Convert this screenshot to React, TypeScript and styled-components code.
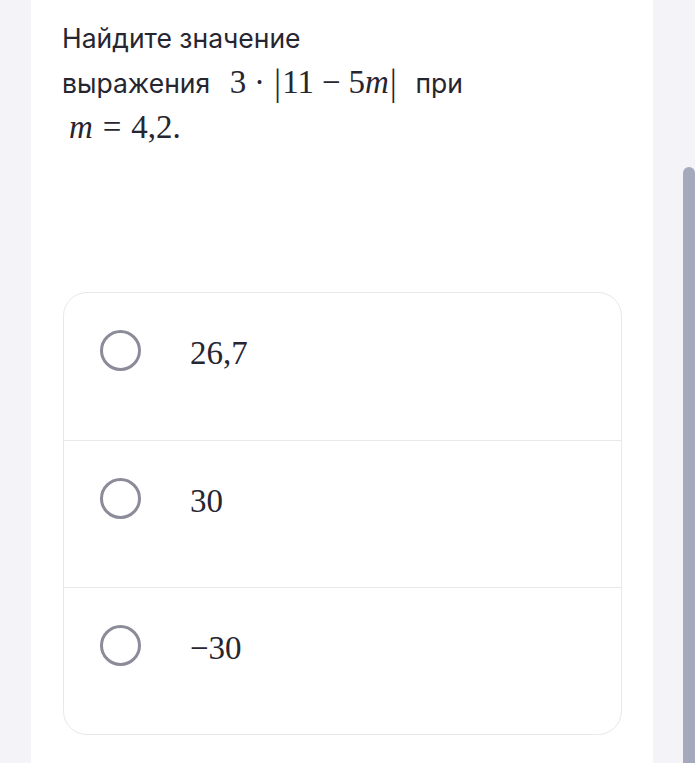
import React from 'react';
import styled, { createGlobalStyle } from 'styled-components';

const GlobalStyle = createGlobalStyle`
    html, body {
        margin: 0;
        padding: 0;
        background: #f3f3f8;
    }
`

const Page = styled.div`
    display: flex;
    min-height: 763px;
`
const Gutter = styled.div`
    width: 31px;
    flex-shrink: 0;
`
const Panel = styled.main`
    width: 622px;
    flex-shrink: 0;
    background: #ffffff;
    padding: 16px 31px 0 31px;
    box-sizing: border-box;
`
const Track = styled.div`
    flex: 1;
    display: flex;
    justify-content: flex-end;
    padding-top: 167px;
`
const Thumb = styled.div`
    width: 12px;
    background: #a5a9bb;
    border-radius: 6px 6px 0 0;
`
const Question = styled.p`
    margin: 0;
    font-family: Inter, "Noto Sans", sans-serif;
    font-size: 26.5px;
    line-height: 45px;
    color: #262631;
`
const MathText = styled.span<{ $left?: number; $right?: number }>`
    font-family: "Liberation Serif", serif;
    font-size: 33px;
    line-height: 1;
    color: #262631;
    white-space: nowrap;
    margin-left: ${props => props.$left ?? 0}px;
    margin-right: ${props => props.$right ?? 0}px;
`
const Var = styled.i`
    font-style: italic;
`
const Op = styled.span<{ $space: number }>`
    margin: 0 ${props => props.$space}em;
`
const Bar = styled.span`
    display: inline-block;
    transform: scaleY(1.15);
    margin: 0 0.04em;
`
const Card = styled.ul`
    list-style: none;
    margin: 141px 0 0 1px;
    padding: 0;
    border: 1.5px solid #e8e8ec;
    border-radius: 24px;
    overflow: hidden;
`
const Option = styled.li`
    display: flex;
    align-items: center;
    gap: 49px;
    height: 147px;
    box-sizing: border-box;
    padding: 0 0 32px 36px;
    & + & {
        border-top: 1.5px solid #e8e8ec;
    }
`
const Radio = styled.span`
    width: 41px;
    height: 41px;
    border: 3.5px solid #8b8b99;
    border-radius: 50%;
    box-sizing: border-box;
    flex-shrink: 0;
`
const Answer = styled.span`
    font-family: "Liberation Serif", serif;
    font-size: 33px;
    color: #262631;
    padding-top: 6px;
`

const answers = ['26,7', '30', '\u221230'];

export default function App(): JSX.Element {
    return (
        <>
            <GlobalStyle />
            <Page>
                <Gutter />
                <Panel>
                    <Question>
                        Найдите значение
                        <br />
                        выражения{' '}
                        <MathText $left={12} $right={10}>
                            3<Op $space={0.24}>·</Op><Bar>|</Bar>11<Op $space={0.24}>−</Op>5<Var>m</Var><Bar>|</Bar>
                        </MathText>{' '}
                        при
                        <br />
                        <MathText $left={7}>
                            <Var>m</Var><Op $space={0.3}>=</Op>4,2.
                        </MathText>
                    </Question>
                    <Card>
                        {answers.map(a => (
                            <Option key={a}>
                                <Radio />
                                <Answer>{a}</Answer>
                            </Option>
                        ))}
                    </Card>
                </Panel>
                <Track>
                    <Thumb />
                </Track>
            </Page>
        </>
    );
}
